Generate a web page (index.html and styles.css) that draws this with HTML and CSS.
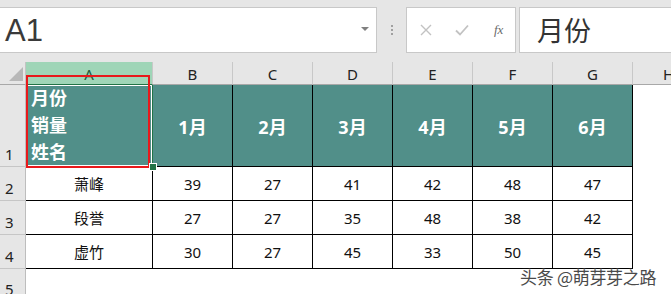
FILE: index.html
```html
<!DOCTYPE html>
<html lang="zh">
<head>
<meta charset="utf-8">
<link rel="stylesheet" href="styles.css">
</head>
<body>
<div class="app">
  <div class="top">
    <div class="namebox">
      <span class="nb-text">A1</span>
      <span class="caret"></span>
    </div>
    <div class="grip"><i></i><i></i><i></i></div>
    <div class="fxbox">
      <svg class="ico" width="12" height="12" viewBox="0 0 12 12"><path d="M1 1L11 11M11 1L1 11" stroke="#c2c2c2" stroke-width="1.4" fill="none"/></svg>
      <svg class="ico" width="14" height="12" viewBox="0 0 14 12"><path d="M1 6.5L5 10.5L13 1.5" stroke="#c2c2c2" stroke-width="1.8" fill="none"/></svg>
      <span class="fx">fx</span>
    </div>
    <div class="formula">月份</div>
  </div>
  <div class="sheet">
    <div class="corner"><svg width="26" height="23" viewBox="0 0 26 23"><path d="M9 19L23 5L23 19Z" fill="#b8b8b8"/></svg></div>
    <div class="ch ch-sel">A</div>
    <div class="ch">B</div>
    <div class="ch">C</div>
    <div class="ch">D</div>
    <div class="ch">E</div>
    <div class="ch">F</div>
    <div class="ch">G</div>
    <div class="ch ch-last">H</div>

    <div class="rh">1</div>
    <div class="hc sel"><span>月份</span><span>销量</span><span>姓名</span></div>
    <div class="hc">1月</div>
    <div class="hc">2月</div>
    <div class="hc">3月</div>
    <div class="hc">4月</div>
    <div class="hc">5月</div>
    <div class="hc">6月</div>
    <div class="blank"></div>

    <div class="rh">2</div>
    <div class="dc">萧峰</div>
    <div class="dc">39</div>
    <div class="dc">27</div>
    <div class="dc">41</div>
    <div class="dc">42</div>
    <div class="dc">48</div>
    <div class="dc">47</div>
    <div class="blank"></div>

    <div class="rh">3</div>
    <div class="dc">段誉</div>
    <div class="dc">27</div>
    <div class="dc">27</div>
    <div class="dc">35</div>
    <div class="dc">48</div>
    <div class="dc">38</div>
    <div class="dc">42</div>
    <div class="blank"></div>

    <div class="rh">4</div>
    <div class="dc">虚竹</div>
    <div class="dc">30</div>
    <div class="dc">27</div>
    <div class="dc">45</div>
    <div class="dc">33</div>
    <div class="dc">50</div>
    <div class="dc">45</div>
    <div class="blank"></div>

    <div class="rh rh-cut">5</div>
    <div class="blank rest"></div>
  </div>
  <div class="redbox"></div>
  <div class="handle"></div>
  <div class="watermark">头条 @萌芽芽之路</div>
</div>
</body>
</html>
```
FILE: styles.css
```css
html, body {
  margin: 0;
  padding: 0;
  background: #fff;
}
.app {
  position: relative;
  width: 671px;
  height: 294px;
  overflow: hidden;
  font-family: "Noto Sans", "Noto Sans CJK SC", sans-serif;
}
.top {
  height: 62px;
  box-sizing: border-box;
  padding-top: 7px;
  background: #e6e6e6;
  display: flex;
  align-items: flex-start;
}
.namebox {
  width: 378px;
  margin-left: -1px;
  height: 46px;
  box-sizing: border-box;
  background: #fff;
  border: 1px solid #c8c8c8;
  display: flex;
  align-items: center;
  justify-content: space-between;
  padding: 0 7px 0 5px;
}
.nb-text {
  font-family: "Liberation Sans", sans-serif;
  font-size: 31px;
  color: #3a3a3a;
  line-height: 1;
  margin-top: 1px;
}
.caret {
  width: 0;
  height: 0;
  border-left: 4px solid transparent;
  border-right: 4px solid transparent;
  border-top: 4px solid #808080;
  margin-top: -2px;
}
.grip {
  width: 29px;
  height: 46px;
  display: flex;
  flex-direction: column;
  align-items: center;
  justify-content: center;
  gap: 2px;
}
.grip i {
  display: block;
  width: 2px;
  height: 2px;
  background: #a0a0a0;
}
.fxbox {
  width: 110px;
  height: 46px;
  box-sizing: border-box;
  background: #fff;
  border: 1px solid #c8c8c8;
  display: flex;
  align-items: center;
  padding-left: 13px;
  gap: 23px;
}
.fx {
  font-family: "Liberation Serif", "DejaVu Serif", serif;
  font-style: italic;
  font-size: 13px;
  color: #6a6a6a;
  margin-left: 2px;
}
.formula {
  flex: 1;
  margin-left: 3px;
  margin-right: -2px;
  height: 46px;
  box-sizing: border-box;
  background: #fff;
  border: 1px solid #c8c8c8;
  padding-left: 17px;
  font-family: "Noto Sans CJK SC", sans-serif;
  font-size: 27px;
  line-height: 43px;
  color: #333;
}
.sheet {
  display: grid;
  grid-template-columns: 26px 127px repeat(6, 80px) 1fr;
  grid-template-rows: 23px 82px 34px 34px 34px 40px;
}
.corner {
  background: #e6e6e6;
  border-right: 1px solid #c4c4c4;
  border-bottom: 1px solid #a8a8a8;
  box-sizing: border-box;
}
.corner svg { display: block; }
.ch {
  background: #e6e6e6;
  border-right: 1px solid #c8c8c8;
  border-bottom: 1px solid #a8a8a8;
  box-sizing: border-box;
  display: flex;
  align-items: center;
  justify-content: center;
  font-size: 15px;
  color: #222;
  padding-top: 1px;
}
.ch-sel {
  background: #9fd5b7;
  color: #1d5a3a;
  border-bottom: 1px solid #217346;
}
.ch-last {
  border-right: none;
  justify-content: flex-start;
  padding-left: 30px;
}
.rh {
  background: #e6e6e6;
  border-right: 1px solid #bdbdbd;
  border-bottom: 1px solid #c6c6c6;
  box-sizing: border-box;
  display: flex;
  align-items: flex-end;
  padding-left: 5px;
  padding-bottom: 2px;
  font-size: 15px;
  color: #222;
  line-height: 20px;
}
.rh-cut {
  border-bottom: none;
  align-items: flex-start;
  padding-top: 10px;
}
.hc {
  background: #518f89;
  border-right: 1px solid #000;
  border-bottom: 1px solid #000;
  box-sizing: border-box;
  display: flex;
  align-items: center;
  justify-content: center;
  color: #fff;
  font-weight: bold;
  font-size: 18px;
  font-family: "Noto Sans", "Noto Sans CJK SC", sans-serif;
}
.hc.sel {
  flex-direction: column;
  align-items: flex-start;
  justify-content: center;
  padding-left: 5px;
  line-height: 27px;
  border-right-color: #217346;
  border-bottom-color: #217346;
  box-shadow: inset 0 0 0 1px #fff;
}
.dc {
  border-right: 1px solid #000;
  border-bottom: 1px solid #000;
  box-sizing: border-box;
  display: flex;
  align-items: center;
  justify-content: center;
  font-size: 15px;
  color: #111;
}
.blank { background: #fff; }
.rest { grid-column: 2 / span 8; }
.redbox {
  position: absolute;
  left: 26px;
  top: 75px;
  width: 124px;
  height: 93px;
  box-sizing: border-box;
  border: 2px solid #e8191b;
}
.handle {
  position: absolute;
  left: 150px;
  top: 164px;
  width: 6px;
  height: 6px;
  background: #217346;
  border: 1px solid #fff;
  box-sizing: content-box;
  margin: -1px;
}
.watermark {
  position: absolute;
  left: 520px;
  top: 266px;
  font-family: "Noto Sans CJK SC", sans-serif;
  font-size: 17px;
  line-height: 22px;
  color: #4a4a4a;
  text-shadow: 0 0 1px #fff, 0 0 2px #fff;
  letter-spacing: -0.3px;
}
```
